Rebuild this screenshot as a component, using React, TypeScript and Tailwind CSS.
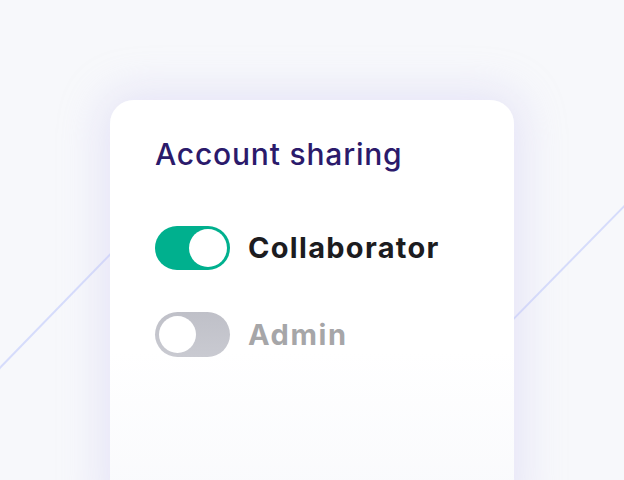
import React from "react";

function Toggle({ on }: { on: boolean }) {
  return on ? (
    <div className="w-[75px] h-[44px] rounded-full bg-[#00b08e] p-[3px] flex justify-end">
      <div className="w-[38px] h-[38px] rounded-full bg-white" />
    </div>
  ) : (
    <div className="w-[75px] h-[45px] rounded-full bg-gradient-to-b from-[#bfc0c8] to-[#c9cad1] p-[4px] flex justify-start">
      <div className="w-[37px] h-[37px] rounded-full bg-white" />
    </div>
  );
}

export default function App() {
  return (
    <div
      className="relative w-[624px] h-[480px] overflow-hidden bg-[#f7f8fb]"
      style={{ fontFamily: "Inter, 'Noto Sans', sans-serif" }}
    >
      <svg className="absolute inset-0" width="624" height="480">
        <line x1="-10" y1="378" x2="130" y2="234" stroke="#d6dcfb" strokeWidth="2" />
        <line x1="490" y1="343" x2="640" y2="190" stroke="#d6dcfb" strokeWidth="2" />
      </svg>
      <div className="relative pt-[100px] flex justify-center">
        <div className="w-[404px] h-[420px] rounded-[24px] bg-gradient-to-b from-white from-60% to-[#f8f9fc] shadow-[0_0_40px_10px_rgba(200,195,240,0.35)] pl-[45px] pt-[36px]">
          <div className="text-[30px] leading-[36px] font-medium text-[#2b1a6b] tracking-[0.8px]">
            Account sharing
          </div>
          <div className="mt-[54px] flex items-center gap-[18px]">
            <Toggle on />
            <span className="text-[29px] font-bold text-[#1c1c1f] tracking-[1.3px]">Collaborator</span>
          </div>
          <div className="mt-[42px] flex items-center gap-[18px]">
            <Toggle on={false} />
            <span className="text-[29px] font-bold text-[#a6a6a8] tracking-[1.6px]">Admin</span>
          </div>
        </div>
      </div>
    </div>
  );
}
